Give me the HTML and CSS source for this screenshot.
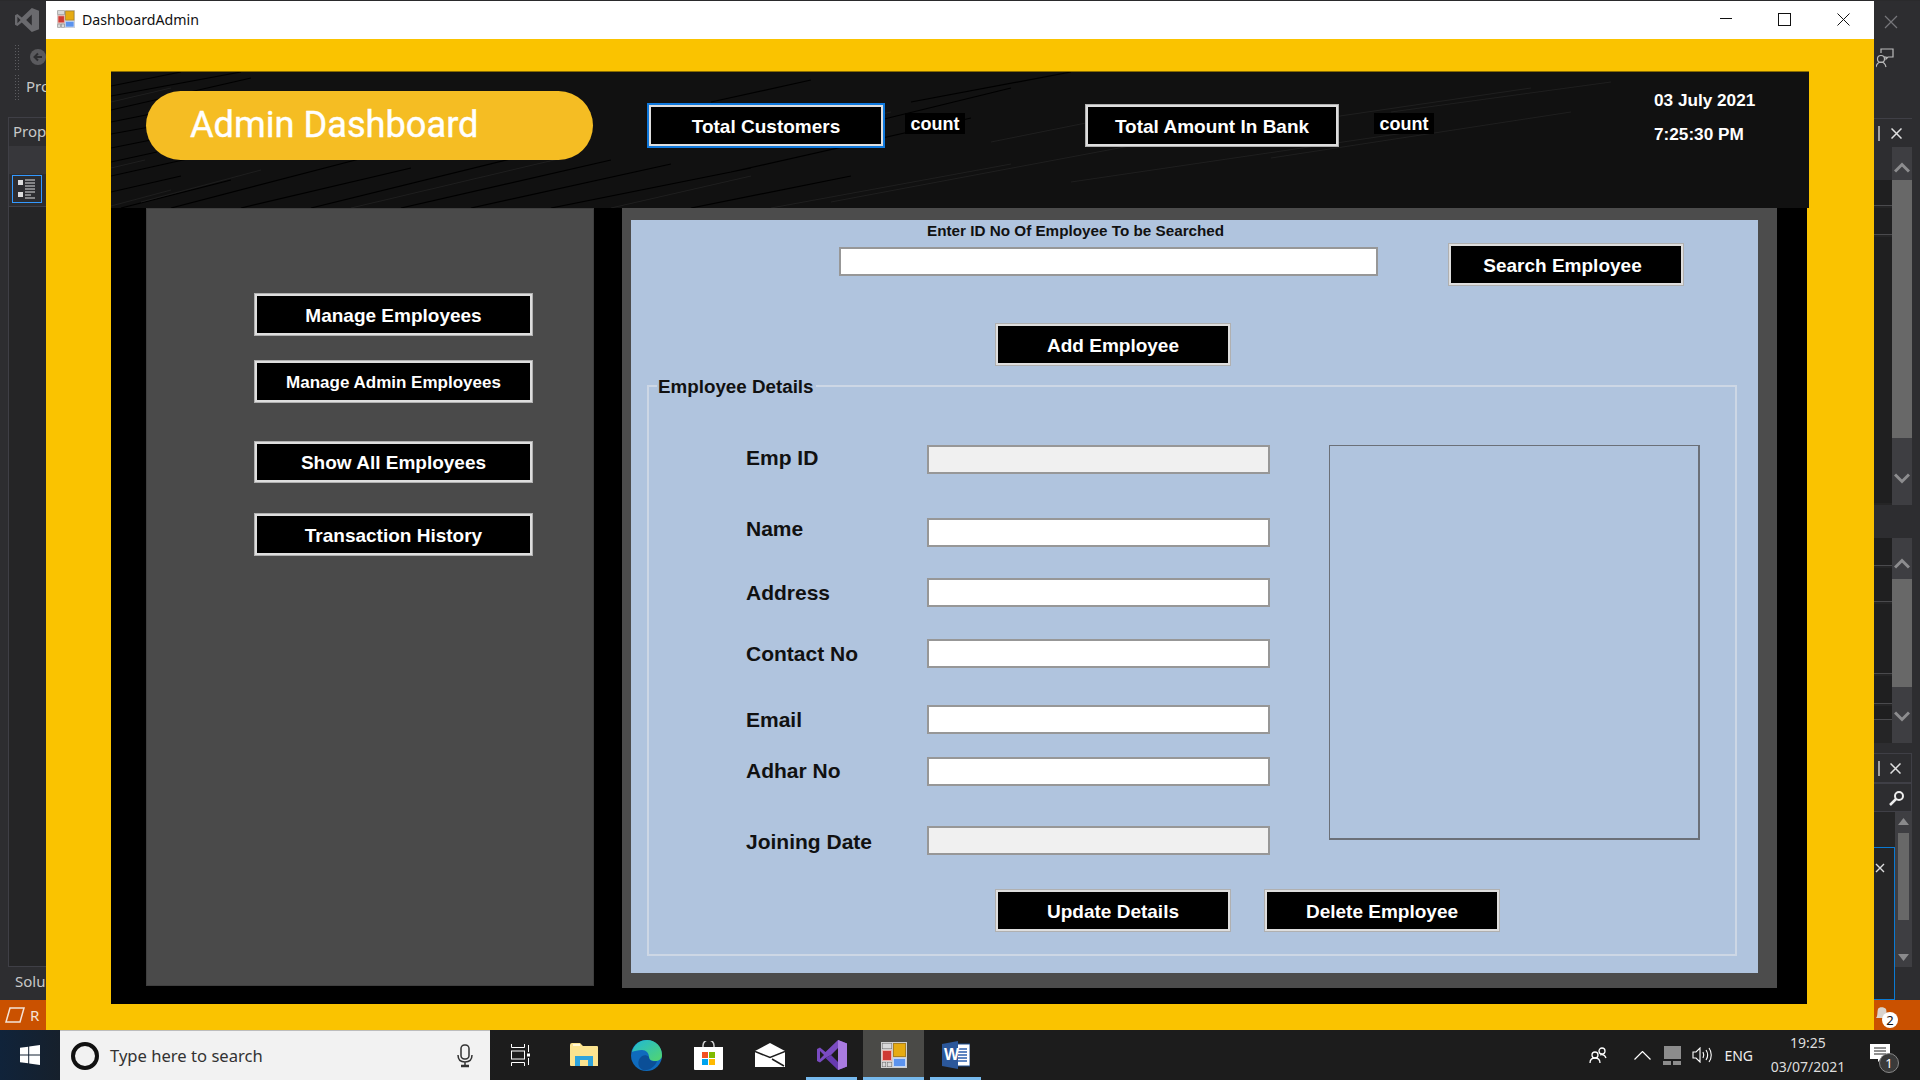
FILE: index.html
```html
<!DOCTYPE html>
<html lang="en">
<head>
<meta charset="utf-8">
<title>DashboardAdmin</title>
<link rel="stylesheet" href="styles.css">
</head>
<body>
<svg class="defs" width="0" height="0" aria-hidden="true">
  <symbol id="app" viewBox="0 0 26 26">
    <rect x="0" y="0" width="26" height="26" fill="#cfcfcf"/>
    <path d="M1 1h10v6H1zM1 20h4v5H1zM6 20h5v5H6z" fill="#6b6b6b"/>
    <path d="M1.500 1.500h9v5h-9zM1.500 20.500h3v4h-3zM6.500 20.500h4v4h-4z" fill="#d9d9d9"/>
    <rect x="1.500" y="8.500" width="9" height="10" fill="#cf3a34" stroke="#eeb4ac"/>
    <rect x="12.500" y="1.500" width="12" height="13" fill="#e6ab12" stroke="#a97f1f"/>
    <rect x="12.500" y="16.500" width="12" height="8" fill="#5b93ee" stroke="#c3d6f4"/>
  </symbol>
  <symbol id="vs" viewBox="0 0 30 30">
    <path d="M21 0l9 3.500v23L21 30 8.500 18 3 22.500 0 21V9l3-1.500L8.500 12zM21 8l-7 7 7 7zM3 11v8l4-4z" fill="currentColor"/>
  </symbol>
</svg>

<div class="desktop">
  <aside class="ide-left">
    <svg class="vs-logo" width="24" height="24"><use href="#vs"/></svg>
    <div class="ide-tool"><span class="grip"></span>
      <svg class="back-dot" width="16" height="16" viewBox="0 0 16 16"><circle cx="8" cy="8" r="8" fill="#5a5a5e"/><path d="M12 8H5M8 4.500L4.500 8 8 11.500" fill="none" stroke="#2d2d30" stroke-width="2"/></svg>
    </div>
    <div class="ide-tool pro"><span class="grip"></span><span class="pro-text">Pro</span></div>
    <div class="ide-panel">
      <div class="ide-panel-title">Prop</div>
      <div class="ide-panel-band"></div>
      <div class="ide-grid-row">
        <span class="grid-btn">
          <svg width="18" height="20" viewBox="0 0 18 20"><path d="M0 1h5v5H0zM0 13h5v5H0z" fill="#ddd"/><path d="M7 1h10M7 4h10M7 7h10M7 10h10M7 13h10M7 16h6M7 19h10" stroke="#ddd" stroke-width="1.200"/></svg>
        </span>
      </div>
      <div class="ide-panel-fill"></div>
    </div>
    <div class="solu">Solu</div>
    <div class="status-left">
      <svg width="20" height="18" viewBox="0 0 20 18"><path d="M5 2h14l-4 14H1z" fill="none" stroke="#f4e3d7" stroke-width="1.500"/></svg>
      <span>R</span>
    </div>
  </aside>

  <main class="window">
    <header class="titlebar">
      <svg class="title-icon" width="18" height="18"><use href="#app"/></svg>
      <span class="title-text">DashboardAdmin</span>
      <div class="win-controls">
        <svg width="12" height="12" viewBox="0 0 12 12"><path d="M0 5.500h12" stroke="#111" stroke-width="1"/></svg>
        <svg width="13" height="13" viewBox="0 0 13 13"><rect x=".5" y=".5" width="12" height="12" fill="none" stroke="#111"/></svg>
        <svg width="13" height="13" viewBox="0 0 13 13"><path d="M.5.500l12 12M12.500.500l-12 12" stroke="#111" stroke-width="1"/></svg>
      </div>
    </header>

    <div class="form-area">
      <section class="head-panel">
        <svg class="streaks" width="1698" height="136" viewBox="0 0 1698 136" aria-hidden="true">
          <g stroke="#000" stroke-width="1.200" fill="none">
            <path d="M0 14L70 0M0 24L130 0M0 38L140 6M0 50L50 40M0 62L44 54M0 76L40 68M0 90L46 80M0 104L90 84M0 120L70 104M10 136L120 108M60 136L260 84M130 136L300 96M200 136L420 82M290 136L500 88M360 136L560 92M440 136L640 96M580 136L740 104M620 100L860 46M560 60L660 36M600 30L700 8M720 60L900 16M800 30L960 0"/>
          </g>
          <g stroke="#1f1f1f" stroke-width="1" fill="none">
            <path d="M0 30L60 16M0 96L34 88M30 130L150 98M0 134L60 118M240 136L460 84M500 136L640 104M640 70L780 40M660 136L900 92M880 70L1050 36M720 130L1040 70M960 110L1300 60M1120 60L1420 16M1160 86L1460 40M1280 40L1500 10"/>
          </g>
        </svg>
        <h1 class="pill">Admin Dashboard</h1>
        <button class="btn stat-a focus">Total Customers</button>
        <span class="count count-a">count</span>
        <button class="btn stat-b">Total Amount In Bank</button>
        <span class="count count-b">count</span>
        <div class="clock">
          <div>03 July 2021</div>
          <div>7:25:30 PM</div>
        </div>
      </section>

      <section class="body-panel">
        <nav class="side">
          <button class="btn side-btn s1">Manage Employees</button>
          <button class="btn side-btn s2 small">Manage Admin Employees</button>
          <button class="btn side-btn s3">Show All Employees</button>
          <button class="btn side-btn s4">Transaction History</button>
        </nav>
        <div class="content-frame">
          <div class="content">
            <div class="search-row">
              <div class="search-field">
                <label class="search-label" for="q">Enter ID No Of Employee To be Searched</label>
                <input id="q" class="field search-input" type="text">
              </div>
              <button class="btn act-btn search-btn">Search Employee</button>
            </div>
            <button class="btn act-btn add-btn">Add Employee</button>
            <div class="group">
              <div class="group-title">Employee Details</div>
              <div class="group-main">
                <div class="rows">
                  <div class="row r1"><label>Emp ID</label><input class="field" disabled></div>
                  <div class="row r2"><label>Name</label><input class="field"></div>
                  <div class="row r3"><label>Address</label><input class="field"></div>
                  <div class="row r4"><label>Contact No</label><input class="field"></div>
                  <div class="row r5"><label>Email</label><input class="field"></div>
                  <div class="row r6"><label>Adhar No</label><input class="field"></div>
                  <div class="row r7"><label>Joining Date</label><input class="field" disabled></div>
                </div>
                <div class="picture"></div>
              </div>
              <div class="group-actions">
                <button class="btn act-btn">Update Details</button>
                <button class="btn act-btn">Delete Employee</button>
              </div>
            </div>
          </div>
        </div>
      </section>
    </div>
  </main>

  <aside class="ide-right">
    <svg class="ide-close" width="14" height="14" viewBox="0 0 14 14"><path d="M1 1l12 12M13 1L1 13" stroke="#77777b" stroke-width="1.200"/></svg>
    <svg class="ide-feedback" width="18" height="20" viewBox="0 0 18 20"><path d="M5 5V1h12v8h-5l-2 2V9H8" fill="none" stroke="#bbb" stroke-width="1.200"/><circle cx="5" cy="11" r="3.500" fill="none" stroke="#bbb" stroke-width="1.200"/><path d="M0 19c1-4 3-5 5-5s4 1 5 5" fill="none" stroke="#bbb" stroke-width="1.200"/></svg>
    <div class="dock d1">
      <div class="dock-head"><span class="pin"></span><svg width="11" height="11" viewBox="0 0 11 11"><path d="M.5.500l10 10M10.500.500l-10 10" stroke="#e0e0e0" stroke-width="1.500"/></svg></div>
      <div class="dock-body">
        <div class="dock-list"><span class="lst h1"></span><span class="lst h2"></span><span class="lst h3"></span></div>
        <div class="track">
          <svg class="chev" width="16" height="11" viewBox="0 0 16 11"><path d="M1 9.500l7-7 7 7" fill="none" stroke="#8d8d8f" stroke-width="3"/></svg>
          <div class="thumb t1"></div>
          <svg class="chev" width="16" height="11" viewBox="0 0 16 11"><path d="M1 1.500l7 7 7-7" fill="none" stroke="#8d8d8f" stroke-width="3"/></svg>
        </div>
      </div>
    </div>
    <div class="dock d2">
      <div class="dock-body">
        <div class="dock-list"><span class="lst h4"></span><span class="lst h5"></span><span class="lst h6"></span><span class="lst h7"></span><span class="lst h8"></span></div>
        <div class="track">
          <svg class="chev" width="16" height="11" viewBox="0 0 16 11"><path d="M1 9.500l7-7 7 7" fill="none" stroke="#8d8d8f" stroke-width="3"/></svg>
          <div class="thumb t2"></div>
          <svg class="chev" width="16" height="11" viewBox="0 0 16 11"><path d="M1 1.500l7 7 7-7" fill="none" stroke="#8d8d8f" stroke-width="3"/></svg>
        </div>
      </div>
    </div>
    <div class="dock d3">
      <div class="dock-head low"><span class="pin"></span><svg width="11" height="11" viewBox="0 0 11 11"><path d="M.5.500l10 10M10.500.500l-10 10" stroke="#e0e0e0" stroke-width="1.500"/></svg></div>
      <div class="dock-search"><svg width="16" height="16" viewBox="0 0 16 16"><circle cx="10" cy="6" r="4" fill="none" stroke="#eee" stroke-width="2"/><path d="M7 9l-6 6" stroke="#eee" stroke-width="2.500"/></svg></div>
      <div class="dock-tree">
        <div class="tree-left">
          <div class="tree-top"></div>
          <div class="tree-tip"><svg width="10" height="10" viewBox="0 0 10 10"><path d="M1 1l8 8M9 1l-8 8" stroke="#ddd" stroke-width="1.400"/></svg></div>
        </div>
        <div class="track slim">
          <svg width="11" height="7" viewBox="0 0 11 7"><path d="M0 7l5.500-7L11 7z" fill="#8a8a8c"/></svg>
          <div class="thumb t3"></div>
          <svg width="11" height="7" viewBox="0 0 11 7"><path d="M0 0l5.500 7L11 0z" fill="#8a8a8c"/></svg>
        </div>
      </div>
    </div>
    <div class="status-right">
      <svg width="14" height="17" viewBox="0 0 14 17"><path d="M1 14c2-2 1-6 2-9 1-2.500 6-2.500 8 0 1 3 0 7 2 9z" fill="#d9d3cd"/></svg>
      <span class="bell-badge">2</span>
    </div>
  </aside>
</div>

<footer class="taskbar">
  <div class="start">
    <svg width="20" height="20" viewBox="0 0 20 20"><path d="M0 2.800l8.200-1.100v7.800H0zM9.200 1.500L20 0v9.500H9.200zM0 10.500h8.200v7.800L0 17.200zM9.200 10.500H20V20L9.200 18.500z" fill="#fff"/></svg>
  </div>
  <div class="searchbox">
    <span class="cortana"></span>
    <span class="search-text">Type here to search</span>
    <svg class="mic" width="16" height="24" viewBox="0 0 16 24"><rect x="4" y="1" width="8" height="14" rx="3.500" fill="none" stroke="#333" stroke-width="1.500"/><path d="M1 11c0 5 3 7 7 7s7-2 7-7M8 18v3" fill="none" stroke="#333" stroke-width="1.500"/><path d="M4 22h8" stroke="#333" stroke-width="2.500"/></svg>
  </div>
  <div class="task-view">
    <svg width="20" height="22" viewBox="0 0 20 22"><g fill="none" stroke="#fff" stroke-width="1"><path d="M1.500 0v3.500h13V0M1.500 22v-3.500h13V22"/><rect x="1.500" y="7" width="13" height="8"/><path d="M18.500 1v7M18.500 14v7"/></g><rect x="17" y="9.500" width="3" height="3" fill="#fff"/></svg>
  </div>
  <div class="tb-icon">
    <svg width="28" height="24" viewBox="0 0 28 24"><path d="M0 2a2 2 0 012-2h8l3 3h14a1 1 0 011 1v19H1a1 1 0 01-1-1z" fill="#fbe38f"/><path d="M3 1h7v2H3z" fill="#fff8d8"/><path d="M5 13h18v10h-5v-6h-8v6H5z" fill="#2ea3dc"/><path d="M10 18h8v5h-8z" fill="#fbe38f"/></svg>
  </div>
  <div class="tb-icon">
    <svg width="31" height="31" viewBox="0 0 31 31"><defs><linearGradient id="edgeA" x1="0" y1="0" x2="1" y2="1"><stop offset="0" stop-color="#1fb8d8"/><stop offset="1" stop-color="#54d66c"/></linearGradient></defs><circle cx="15.500" cy="15.500" r="15.500" fill="#0f6bbd"/><path d="M1 12C3 4 9 0 16 0c9 0 15 7 15 15 0 4-3 6-7 6-3 0-6-1-6-4 0-4-3-7-7-7-4 0-8 1-10 2z" fill="url(#edgeA)"/><path d="M12 30C7 28 6 22 9 18c2-3 6-4 9-1 0 4 4 5 8 4-2 6-8 10-14 9z" fill="#0b4f97"/></svg>
  </div>
  <div class="tb-icon">
    <svg width="29" height="29" viewBox="0 0 29 29"><path d="M9 7V4.500a5.500 5.500 0 0111 0V7" fill="none" stroke="#cfcfcf" stroke-width="1.500"/><path d="M0 6h29v22a1 1 0 01-1 1H1a1 1 0 01-1-1z" fill="#fff"/><rect x="8" y="11" width="6" height="6" fill="#f25022"/><rect x="15" y="11" width="6" height="6" fill="#7fba00"/><rect x="8" y="18" width="6" height="6" fill="#00a4ef"/><rect x="15" y="18" width="6" height="6" fill="#ffb900"/></svg>
  </div>
  <div class="tb-icon">
    <svg width="30" height="24" viewBox="0 0 30 24"><path d="M0 8L15 0l15 8v16H0z" fill="#fff"/><path d="M0 8.500l15 6 15-6" fill="none" stroke="#1c1c1c" stroke-width="1.500"/><path d="M17 16l12 7" stroke="#1c1c1c" stroke-width="1.500"/></svg>
  </div>
  <div class="tb-icon active-dim">
    <svg class="vs-task" width="30" height="30" viewBox="0 0 30 30"><path d="M21 0l9 3.500v23L21 30V8l-7 7-5.500 3L3 22.500 0 21V9l3-1.500L8.500 12z" fill="#7a4bc1"/><path d="M21 0l9 3.500v23L21 30z" fill="#a97be0"/><path d="M21 30L8.500 18 14 15l7 7z" fill="#673ab0"/><path d="M3 11v8l4-4z" fill="#1c1c1c"/></svg>
  </div>
  <div class="tb-icon active">
    <svg width="26" height="26"><use href="#app"/></svg>
  </div>
  <div class="tb-icon word">
    <svg width="28" height="28" viewBox="0 0 28 28"><path d="M10 3h18v22H10z" fill="#fff" stroke="#1d4f91"/><path d="M16 8h9M16 11h9M16 14h9M16 17h9M16 20h9" stroke="#2b5fad" stroke-width="1.500"/><path d="M0 3l16-3v28L0 25z" fill="#2b579a"/><text class="word-w" x="2" y="19">W</text></svg>
  </div>
  <div class="tray">
    <svg class="people" width="18" height="17" viewBox="0 0 18 17"><g fill="none" stroke="#fff" stroke-width="1.300"><circle cx="13" cy="4" r="3"/><circle cx="6" cy="8" r="3"/><path d="M1 16c0-3 2-5 5-5s5 2 5 5M11 8c3-1 5 0 6 3"/></g></svg>
    <svg class="chev-up" width="17" height="9" viewBox="0 0 17 9"><path d="M.5 8.500l8-8 8 8" fill="none" stroke="#fff" stroke-width="1.200"/></svg>
    <svg class="net" width="18" height="19" viewBox="0 0 18 19"><rect x="1" y="0" width="17" height="13" fill="#8c8c8c"/><rect x="0" y="15" width="8" height="4" fill="#8c8c8c"/><rect x="10" y="15" width="8" height="4" fill="#8c8c8c"/></svg>
    <svg class="vol" width="20" height="16" viewBox="0 0 20 16"><g fill="none" stroke="#fff" stroke-width="1.100"><path d="M1 5h3l4-4v14l-4-4H1z"/><path d="M11 5c1 2 1 4 0 6M14 3c2 3 2 7 0 10M17 1c3 4 3 10 0 14"/></g></svg>
    <span class="eng">ENG</span>
    <div class="tray-clock"><div>19:25</div><div>03/07/2021</div></div>
    <div class="notify">
      <svg width="20" height="18" viewBox="0 0 20 18"><path d="M0 0h20v15H11l-3 3v-3H0z" fill="#fff"/><path d="M4 4h12M4 7h12M4 10h12" stroke="#222"/></svg>
      <span class="notify-badge">1</span>
    </div>
  </div>
</footer>
</body>
</html>
```

FILE: styles.css
```css
* { box-sizing: border-box; }
html, body { margin: 0; height: 100%; overflow: hidden; }
body { width: 1920px; height: 1080px; display: flex; flex-direction: column; background: #2d2d30; font-family: "Liberation Sans", Arial, sans-serif; }
.defs { position: absolute; }
button { font-family: inherit; }

.desktop { display: flex; height: 1030px; border-top: 1px solid #2a2a2c; }

/* IDE left strip */
.ide-left { width: 46px; display: flex; flex-direction: column; background: #2d2d30; overflow: hidden; color: #c8c8c8; font-family: "Noto Sans", sans-serif; font-size: 15px; }
.vs-logo { color: #6a6a6e; margin: 7px 0 0 15px; flex: none; }
.ide-tool { height: 30px; display: flex; align-items: center; gap: 11px; padding-left: 14px; flex: none; margin-top: 10px; }
.ide-tool.pro { margin-top: 0; gap: 7px; height: 32px; padding-bottom: 3px; }
.grip { width: 5px; height: 26px; background: radial-gradient(#5c5c60 35%, transparent 40%) 0 0 / 3px 3px; flex: none; }
.back-dot { flex: none; }
.pro-text { line-height: 1; }
.ide-panel { margin: 13px 0 0 8px; height: 850px; border: 1px solid #3f3f46; border-right: 0; flex: none; width: 38px; display: flex; flex-direction: column; background: #252526; }
.ide-panel-title { height: 28px; line-height: 26px; padding-left: 4px; background: #2d2d30; white-space: nowrap; }
.ide-panel-band { height: 28px; background: #37373b; }
.ide-grid-row { height: 33px; padding: 1px 0 0 3px; background: #2d2d30; border-bottom: 1px solid #3f3f46; }
.grid-btn { width: 30px; height: 28px; border: 1px solid #3399ff; display: flex; align-items: center; justify-content: center; }
.ide-panel-fill { flex: 1; }
.solu { height: 32px; line-height: 26px; padding-left: 15px; margin-top: 1px; flex: none; white-space: nowrap; }
.status-left { flex: 1; background: #ca5100; display: flex; align-items: center; gap: 5px; padding-left: 5px; color: #f4e3d7; }

/* window */
.window { width: 1828px; display: flex; flex-direction: column; background: #fac300; }
.titlebar { height: 38px; background: #fff; display: flex; align-items: center; padding: 0 0 2px 11px; flex: none; }
.title-icon { flex: none; }
.title-text { margin-left: 7px; font-family: "Noto Sans", sans-serif; font-size: 14.2px; color: #111; }
.win-controls { margin-left: auto; display: flex; align-items: center; gap: 46px; padding-right: 24px; }

.form-area { flex: 1; padding: 33px 0 0 65px; display: flex; flex-direction: column; }
.head-panel { position: relative; width: 1698px; height: 136px; background: #111; display: flex; align-items: flex-start; padding-left: 35px; overflow: hidden; box-shadow: 0 -1px 0 #8a6d00; }
.streaks { position: absolute; left: 0; top: 0; }
.pill { position: relative; width: 447px; height: 69px; margin: 19px 0 0; padding: 0 0 0 44px; border-radius: 35px; background: #f5bd23; color: #fff; font-family: Roboto, sans-serif; font-size: 36.2px; font-weight: 400; line-height: 67px; white-space: nowrap; -webkit-text-stroke: .4px #fff; }

.btn { position: relative; background: #000; color: #fff; border: 3px solid #dedede; outline: 1px solid rgba(120,120,120,.45); outline-offset: -1px; font-weight: bold; font-size: 19px; padding: 2px 0 0; cursor: default; white-space: nowrap; }
.stat-a { width: 236px; height: 43px; margin: 32px 0 0 55px; }
.focus { outline: 2px solid #0f78dc; outline-offset: -1px; }
.stat-b { width: 254px; height: 43px; margin: 32px 0 0 120px; }
.count { position: relative; height: 21px; width: 60px; margin-top: 41px; background: #000; color: #fff; font-size: 18px; font-weight: bold; line-height: 22px; text-align: center; flex: none; }
.count-a { margin-left: 21px; }
.count-b { margin-left: 35px; }
.clock { position: relative; margin: 18px 0 0 220px; color: #fff; font-size: 17.2px; font-weight: bold; line-height: 20px; display: flex; flex-direction: column; gap: 14px; white-space: nowrap; }

.body-panel { width: 1696px; height: 796px; background: #000; display: flex; align-items: flex-start; padding-left: 35px; }
.side { width: 448px; height: 778px; background: #4a4a4a; display: flex; flex-direction: column; align-items: flex-start; padding: 85px 0 0 108px; box-shadow: inset 0 0 0 1px #3f3f3f; }
.side-btn { width: 279px; height: 43px; flex: none; }
.s2 { margin-top: 24px; height: 43px; }
.s3 { margin-top: 38px; height: 42px; }
.s4 { margin-top: 30px; }
.small { font-size: 17px; }

.content-frame { width: 1155px; height: 780px; margin-left: 28px; background: #4c4c4c; padding: 12px 0 0 9px; }
.content { width: 1127px; height: 753px; background: #b0c4de; padding: 0; }
.search-row { display: flex; align-items: flex-start; padding-left: 208px; }
.search-field { width: 539px; display: flex; flex-direction: column; }
.search-label { height: 27px; line-height: 22px; font-size: 15.25px; font-weight: bold; color: #111; padding-left: 88px; white-space: nowrap; }
.field { display: block; width: 343px; height: 29px; background: #fff; border: 2px solid #979797; border-radius: 0; padding: 0; margin: 0; outline: 0; }
.field:disabled { background: #f0f0f0; }
.search-input { width: 539px; }
.act-btn { width: 236px; height: 43px; flex: none; }
.search-btn { margin: 23px 0 0 70px; padding-right: 7px; }
.add-btn { display: block; margin: 37px 0 0 364px; }

.group { width: 1090px; height: 571px; margin: 19px 0 0 16px; border: 2px solid #cdd7e5; display: flex; flex-direction: column; }
.group-title { align-self: flex-start; margin: -11px 0 0 8px; padding: 0 2px 0 1px; height: 22px; line-height: 22px; background: #b0c4de; color: #111; font-size: 18.8px; font-weight: bold; white-space: nowrap; }
.group-main { display: flex; align-items: flex-start; padding: 47px 0 0 97px; }
.rows { width: 524px; display: flex; flex-direction: column; }
.row { display: flex; align-items: flex-start; }
.row label { width: 181px; height: 29px; line-height: 29px; font-size: 21px; font-weight: bold; color: #111; white-space: nowrap; }
.r1 label { margin-top: -2px; margin-bottom: 2px; }
.r2 { margin-top: 44px; }
.r2 label { margin-top: -4px; margin-bottom: 4px; }
.r3 { margin-top: 31px; }
.r4 { margin-top: 32px; }
.r5 { margin-top: 37px; }
.r6 { margin-top: 23px; }
.r6 label { margin-top: -1px; margin-bottom: 1px; }
.r7 { margin-top: 40px; }
.r7 label { margin-top: 1px; margin-bottom: -1px; }
.picture { width: 371px; height: 395px; margin-left: 59px; border: 1px solid #6b7078; border-width: 1px 2px 2px 1px; flex: none; }
.group-actions { display: flex; gap: 33px; padding-left: 346px; margin-top: 34px; }

/* IDE right strip */
.ide-right { width: 46px; display: flex; flex-direction: column; background: #2d2d30; overflow: hidden; }
.ide-close { margin: 14px 0 0 10px; flex: none; }
.ide-feedback { margin: 19px 0 0 2px; flex: none; }
.dock { flex: none; width: 38px; }
.d1 { margin-top: 50px; height: 387px; background: #2d2d30; }
.d2 { margin-top: 33px; height: 205px; }
.d3 { margin-top: 10px; height: 247px; }
.dock-head { height: 29px; display: flex; align-items: center; justify-content: space-between; padding-right: 10px; border-top: 1px solid #3f3f46; }
.dock-head.low { height: 30px; border: 1px solid #3f3f46; border-left: 0; }
.pin { width: 6px; height: 15px; border-right: 2px solid #a0a0a0; }
.dock-body { display: flex; height: 358px; }
.d2 .dock-body { height: 205px; }
.dock-list { width: 18px; background: #252526; display: flex; flex-direction: column; gap: 2px; flex: none; }
.d1 .dock-list { height: 358px; padding-top: 33px; background: linear-gradient(#2d2d30 33px, #252526 33px); }
.lst { display: block; background: #1f1f20; flex: none; border-bottom: 1px solid #4a4a4d; }
.h1 { height: 26px; }
.h2 { height: 27px; }
.h3 { height: 266px; border-bottom: 0; }
.h4 { height: 28px; }
.h5 { height: 34px; }
.h6 { height: 70px; }
.h7 { height: 28px; }
.h8 { height: 14px; }
.track { width: 20px; background: #3e3e42; display: flex; flex-direction: column; align-items: center; flex: none; }
.d1 .track { padding-top: 15px; }
.d2 .track { padding-top: 20px; }
.thumb { width: 20px; background: #686868; flex: none; }
.t1 { height: 258px; margin: 7px 0 35px; }
.t2 { height: 108px; margin: 10px 0 24px; }
.dock-search { height: 29px; display: flex; align-items: center; justify-content: flex-end; padding-right: 6px; border: 1px solid #3f3f46; border-left: 0; }
.dock-tree { display: flex; align-items: flex-start; height: 188px; }
.tree-left { width: 21px; height: 188px; display: flex; flex-direction: column; flex: none; }
.tree-top { height: 35px; background: #262627; flex: none; }
.tree-tip { flex: 1; border: 1px solid #0a7ad4; border-width: 1px 1px 1px 0; background: #252526; padding: 11px 0 0 1px; }
.track.slim { width: 17px; height: 155px; padding-top: 6px; }
.thumb.t3 { width: 11px; height: 87px; margin: 8px 0 34px; }
.status-right { flex: 1; background: #ca5100; position: relative; padding: 4px 0 0 1px; }
.bell-badge { position: absolute; left: 8px; top: 12px; width: 16px; height: 16px; border-radius: 50%; background: #fff; color: #111; font: 13px/16px "Noto Sans", sans-serif; text-align: center; }

/* taskbar */
.taskbar { height: 50px; display: flex; align-items: stretch; background: linear-gradient(90deg, #10233a 0, #16202c 60px, #1c1c1c 500px); color: #fff; flex: none; }
.start { width: 60px; display: flex; align-items: center; padding-left: 20px; }
.searchbox { width: 430px; background: #f2f2f2; border-top: 1px solid #bdbdbd; display: flex; align-items: center; padding: 0 17px 0 11px; }
.cortana { width: 28px; height: 28px; border-radius: 50%; border: 4px solid #111; background: #f2f2f2; flex: none; }
.search-text { margin-left: 11px; font-family: "Noto Sans", sans-serif; font-size: 16.6px; color: #333; flex: 1; }
.mic { flex: none; }
.task-view { width: 63px; display: flex; align-items: center; padding-left: 20px; }
.tb-icon { width: 62px; display: flex; align-items: center; justify-content: center; border-bottom: 3px solid transparent; padding-top: 3px; }
.active-dim { width: 51px; margin: 0 5px; border-bottom-color: #76b9ed; }
.active { width: 61px; margin-left: 1px; background: #4a4a47; border-bottom-color: #76b9ed; }
.word { width: 51px; margin-left: 6px; border-bottom-color: #76b9ed; }
.word-w { font: bold 16px "Liberation Sans", sans-serif; fill: #fff; }
.tray { margin-left: auto; display: flex; align-items: center; padding-right: 30px; }
.people { margin-right: 27px; }
.chev-up { margin-right: 12px; }
.net { margin-right: 11px; }
.vol { margin-right: 12px; }
.eng { font: 14px "Noto Sans", sans-serif; color: #eee; margin-right: 17px; }
.tray-clock { width: 76px; font: 14px/24px "Noto Sans", sans-serif; color: #ddd; text-align: center; margin-right: 24px; white-space: nowrap; }
.notify { position: relative; width: 20px; height: 18px; margin-top: -4px; }
.notify-badge { position: absolute; left: 9px; top: 9px; width: 20px; height: 20px; border-radius: 50%; background: #3a3a3a; border: 1px solid #888; color: #fff; font: 13px/18px "Noto Sans", sans-serif; text-align: center; }
```
